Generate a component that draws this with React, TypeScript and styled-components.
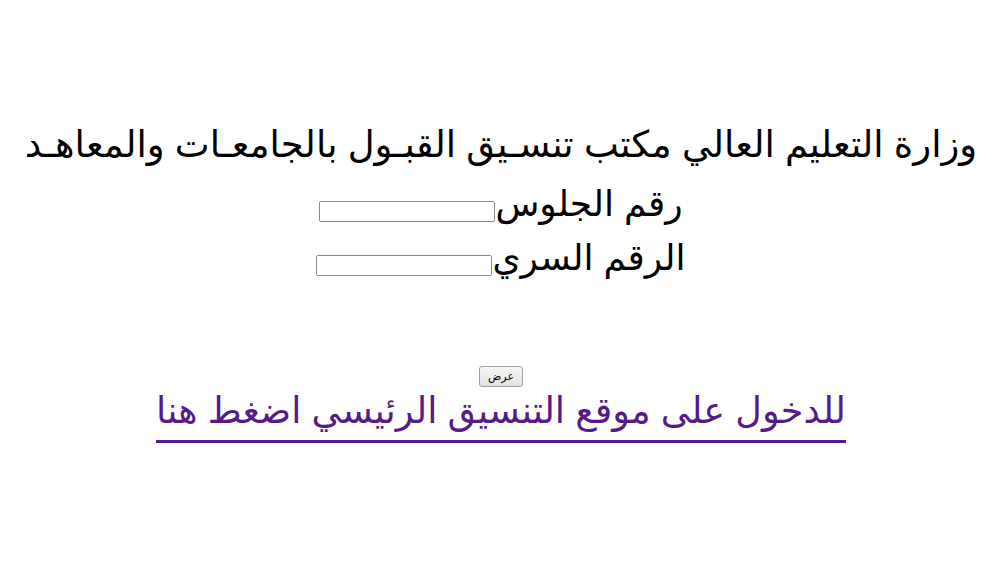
import React from 'react';
import styled, { createGlobalStyle } from 'styled-components';

const GlobalStyle = createGlobalStyle`
  html, body {
    margin: 0;
    padding: 0;
    background: #ffffff;
  }
  body {
    margin: 8px;
    font-family: Arial, "Liberation Sans", "DejaVu Sans", sans-serif;
  }
`;

/*
 * Styles
 */
const Page = styled.form`
  direction: rtl;
  text-align: center;
  padding-top: 112px;
  color: #000;
  font-size: 36px;
`;

const Title = styled.div`
  font-size: 37px;
  line-height: 50px;
  padding-bottom: 7px;
  white-space: nowrap;
`;

const FieldRow = styled.div`
  line-height: 54px;
`;

const TextInput = styled.input`
  width: 176px;
  height: 21px;
  box-sizing: border-box;
  border: 1px solid #8a8a8a;
  border-radius: 2px;
  background: #fff;
  padding: 1px 2px;
  font-size: 13px;
  vertical-align: baseline;
`;

const ButtonRow = styled.div`
  margin-top: 81px;
  line-height: 21px;
`;

const Submit = styled.button`
  width: 44px;
  height: 21px;
  box-sizing: border-box;
  border: 1px solid #a0a0a0;
  border-radius: 3px;
  background: linear-gradient(#f6f6f6, #e2e2e2);
  font-family: Tahoma, "DejaVu Sans", sans-serif;
  font-size: 11px;
  color: #000;
  padding: 0;
  vertical-align: top;
`;

const LinkRow = styled.div`
  line-height: 48px;
`;

/* underline sits well below the Arabic descenders, as in the original */
const MainLink = styled.a`
  display: inline-block;
  font-size: 36.6px;
  line-height: 42px;
  padding-bottom: 8px;
  color: #551a8b;
  text-decoration: none;
  border-bottom: 3px solid #551a8b;
`;

export default function App() {
  return (
    <>
      <GlobalStyle />
      <Page onSubmit={(e) => e.preventDefault()}>
        <Title>وزارة التعليم العالي مكتب تنسـيق القبـول بالجامعـات والمعاهـد</Title>
        <FieldRow>
          رقم الجلوس<TextInput type="text" />
        </FieldRow>
        <FieldRow>
          الرقم السري<TextInput type="password" />
        </FieldRow>
        <ButtonRow>
          <Submit type="submit">عرض</Submit>
        </ButtonRow>
        <LinkRow>
          <MainLink href="#">للدخول على موقع التنسيق الرئيسي اضغط هنا</MainLink>
        </LinkRow>
      </Page>
    </>
  );
}
